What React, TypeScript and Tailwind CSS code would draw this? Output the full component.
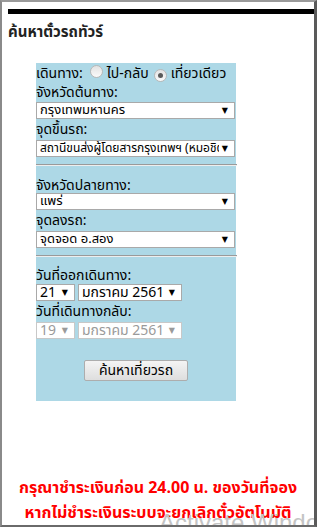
const thai = "font-['Tahoma','Noto_Sans_Thai','Loma','Garuda','DejaVu_Sans',sans-serif]";

function Select({
  text,
  width,
  size = "text-[13px]",
  disabled,
}: {
  text: string;
  width: string;
  size?: string;
  disabled?: boolean;
}) {
  return (
    <div
      className={`flex h-[17px] items-center border bg-white pl-[3px] pr-[6px] leading-[15px] ${size} ${width} ${
        disabled ? "border-[#c8c8c8] text-[#9a9a9a]" : "border-[#a9a9a9] text-black"
      }`}
    >
      <span className="min-w-0 flex-1 overflow-hidden whitespace-nowrap">{text}</span>
      <span className={`ml-[3px] shrink-0 text-[8px] leading-none ${disabled ? "text-[#9a9a9a]" : "text-black"}`}>▼</span>
    </div>
  );
}

function Radio({ checked }: { checked?: boolean }) {
  return (
    <span className="inline-flex h-[13px] w-[13px] shrink-0 items-center justify-center rounded-full border border-[#b8b8b8] bg-gradient-to-b from-[#e2e2e2] to-[#fafafa]">
      {checked && <span className="h-[5px] w-[5px] rounded-full bg-[#5a5a5a]" />}
    </span>
  );
}

export default function App() {
  return (
    <div className={`relative h-[527px] w-[317px] overflow-hidden border-t-2 border-l-2 border-b-2 border-r-[3px] border-t-[#9a9a9a] border-l-[#8a8a8a] border-b-[#6a6a6a] border-r-[#5a5a5a] bg-white ${thai}`}>
      <div className="ml-[6px] mt-[7px] h-[5px] w-[306px] bg-black" />
      <h1 className="ml-[6px] mt-[9px] text-[15px] font-bold leading-[20px] text-[#222]">ค้นหาตั๋วรถทัวร์</h1>

      {/* Search form */}
      <div className="ml-[34px] mt-[20px] w-[200px] bg-[#add8e6] pb-[20px] text-[14px] text-black">
        <div className="flex h-[20px] items-center whitespace-nowrap">
          <span>เดินทาง:</span>
          <span className="ml-[7px]"><Radio /></span>
          <span className="ml-[4px]">ไป-กลับ</span>
          <span className="ml-[5px]"><Radio checked /></span>
          <span className="ml-[4px]">เที่ยวเดียว</span>
        </div>
        <div className="flex h-[19px] items-center">จังหวัดต้นทาง:</div>
        <Select text="กรุงเทพมหานคร" width="w-[199px]" />
        <div className="flex h-[21px] items-center">จุดขึ้นรถ:</div>
        <Select text="สถานีขนส่งผู้โดยสารกรุงเทพฯ (หมอชิต" width="w-[199px]" size="text-[12px]" />
        <div className="my-[7px] w-[201px] border-t border-b border-t-[#9a9a9a] border-b-[#eeeeee]" />

        <div className="flex h-[20px] items-center pt-[4px]">จังหวัดปลายทาง:</div>
        <Select text="แพร่" width="w-[199px]" />
        <div className="flex h-[21px] items-center">จุดลงรถ:</div>
        <Select text="จุดจอด อ.สอง" width="w-[199px]" />
        <div className="my-[7px] w-[201px] border-t border-b border-t-[#9a9a9a] border-b-[#eeeeee]" />

        <div className="flex h-[20px] items-center pt-[2px]">วันที่ออกเดินทาง:</div>
        <div className="flex gap-[3px]">
          <Select text="21" width="w-[39px]" size="text-[14px]" />
          <Select text="มกราคม 2561" width="w-[104px]" size="text-[14px]" />
        </div>
        <div className="flex h-[21px] items-center">วันที่เดินทางกลับ:</div>
        <div className="flex gap-[3px]">
          <Select text="19" width="w-[39px]" size="text-[14px]" disabled />
          <Select text="มกราคม 2561" width="w-[104px]" size="text-[14px]" disabled />
        </div>

        <div className="mt-[21px] flex justify-center">
          <button className="h-[21px] w-[104px] rounded-[2px] border border-[#adadad] bg-gradient-to-b from-[#f4f4f4] to-[#dedede] text-[14px] leading-none text-black">
            ค้นหาเที่ยวรถ
          </button>
        </div>
      </div>

      <div className="mt-[75px] text-center text-[16px] font-bold leading-[25px] text-[#ff0000]">
        <p>กรุณาชำระเงินก่อน 24.00 น. ของวันที่จอง</p>
        <p>หากไม่ชำระเงินระบบจะยกเลิกตั๋วอัตโนมัติ</p>
      </div>

      <div className="pointer-events-none absolute left-[157px] top-[509px] whitespace-nowrap font-['Liberation_Sans',sans-serif] text-[24px] leading-none text-[#c4c4c4]">
        Activate Windows
      </div>
    </div>
  );
}
